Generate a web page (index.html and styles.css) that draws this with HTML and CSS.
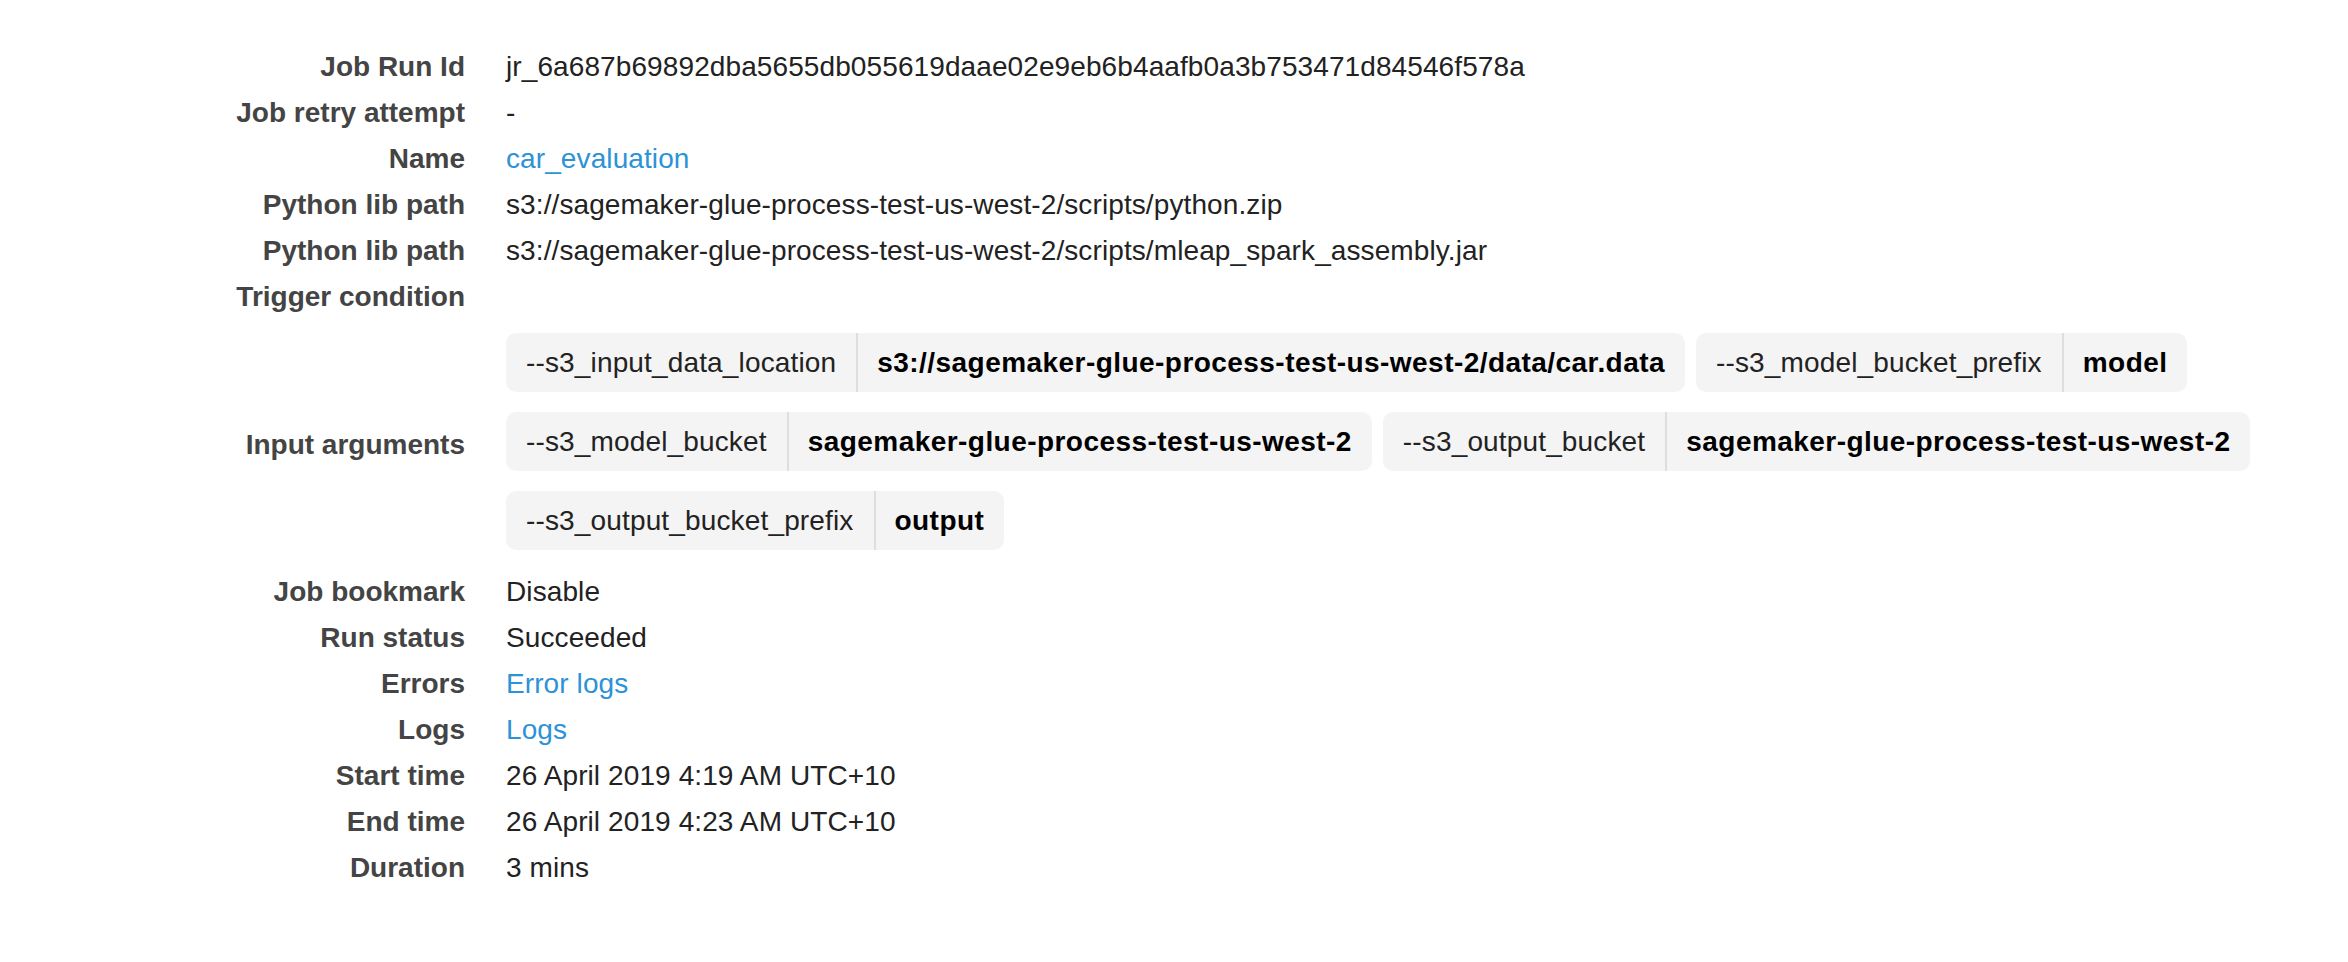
FILE: index.html
```html
<!DOCTYPE html>
<html>
<head>
<meta charset="utf-8">
<link rel="stylesheet" href="styles.css">
</head>
<body>
<div class="details">
  <div class="label">Job Run Id</div>
  <div class="value">jr_6a687b69892dba5655db055619daae02e9eb6b4aafb0a3b753471d84546f578a</div>

  <div class="label">Job retry attempt</div>
  <div class="value">-</div>

  <div class="label">Name</div>
  <div class="value"><a class="link" href="#">car_evaluation</a></div>

  <div class="label">Python lib path</div>
  <div class="value">s3://sagemaker-glue-process-test-us-west-2/scripts/python.zip</div>

  <div class="label">Python lib path</div>
  <div class="value">s3://sagemaker-glue-process-test-us-west-2/scripts/mleap_spark_assembly.jar</div>

  <div class="label">Trigger condition</div>
  <div class="value"></div>

  <div class="label label-center">Input arguments</div>
  <div class="chips">
    <div class="chip"><span class="chip-key">--s3_input_data_location</span><span class="chip-val">s3://sagemaker-glue-process-test-us-west-2/data/car.data</span></div>
    <div class="chip"><span class="chip-key">--s3_model_bucket_prefix</span><span class="chip-val">model</span></div>
    <div class="chip"><span class="chip-key">--s3_model_bucket</span><span class="chip-val">sagemaker-glue-process-test-us-west-2</span></div>
    <div class="chip"><span class="chip-key">--s3_output_bucket</span><span class="chip-val">sagemaker-glue-process-test-us-west-2</span></div>
    <div class="chip"><span class="chip-key">--s3_output_bucket_prefix</span><span class="chip-val">output</span></div>
  </div>

  <div class="label">Job bookmark</div>
  <div class="value">Disable</div>

  <div class="label">Run status</div>
  <div class="value">Succeeded</div>

  <div class="label">Errors</div>
  <div class="value"><a class="link" href="#">Error logs</a></div>

  <div class="label">Logs</div>
  <div class="value"><a class="link" href="#">Logs</a></div>

  <div class="label">Start time</div>
  <div class="value">26 April 2019 4:19 AM UTC+10</div>

  <div class="label">End time</div>
  <div class="value">26 April 2019 4:23 AM UTC+10</div>

  <div class="label">Duration</div>
  <div class="value">3 mins</div>
</div>
</body>
</html>
```

FILE: styles.css
```css
html, body {
  margin: 0;
  padding: 0;
  background: #ffffff;
}

body {
  font-family: "Liberation Sans", Arial, Helvetica, sans-serif;
  font-size: 28px;
  color: #222222;
}

.details {
  display: grid;
  grid-template-columns: 465px 1fr;
  column-gap: 41px;
  padding-top: 44px;
}

.label {
  text-align: right;
  font-weight: bold;
  color: #444444;
  line-height: 46px;
  height: 46px;
  white-space: nowrap;
}

.label-center {
  align-self: center;
}

.value {
  line-height: 46px;
  height: 46px;
  white-space: nowrap;
  color: #222222;
  letter-spacing: 0.1px;
}

.link {
  color: #2d92d6;
  text-decoration: none;
}

.chips {
  display: flex;
  flex-wrap: wrap;
  align-content: flex-start;
  gap: 20px 11px;
  padding: 13px 0 19px;
}

.chip {
  display: flex;
  background: #f4f4f4;
  border-radius: 10px;
  line-height: 59px;
  height: 59px;
  white-space: nowrap;
}

.chip-key {
  padding: 0 20px;
  color: #222222;
  letter-spacing: 0.15px;
  border-right: 2px solid #dedede;
}

.chip-val {
  padding: 0 20px 0 19px;
  font-weight: bold;
  color: #000000;
  letter-spacing: 0.45px;
}
```
